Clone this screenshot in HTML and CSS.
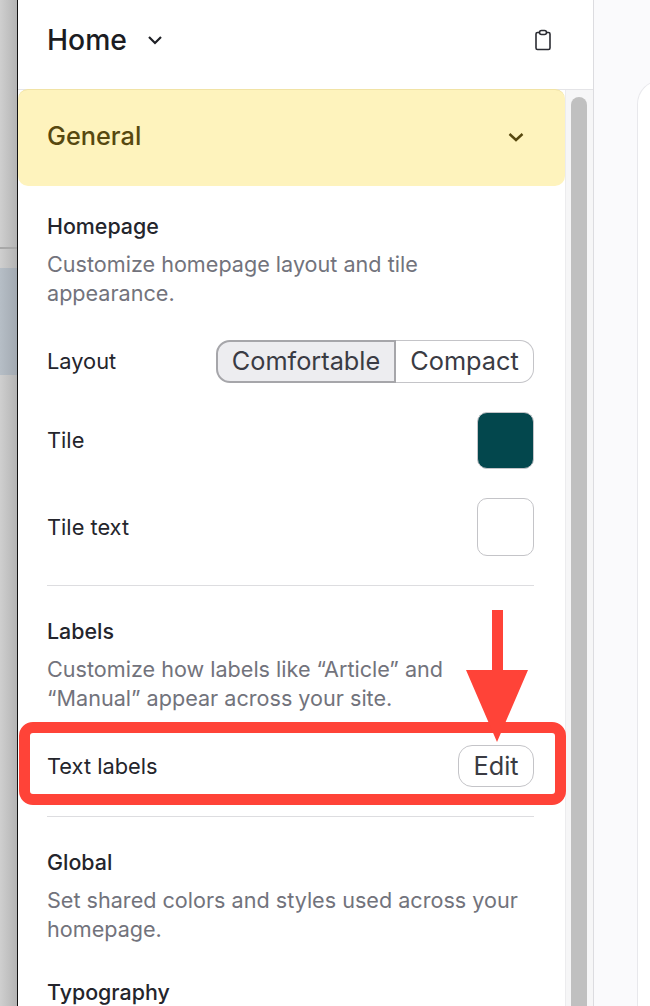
FILE: index.html
```html
<!DOCTYPE html>
<html lang="en">

<head>
  <meta charset="UTF-8">
  <title>Home settings</title>
  <link rel="stylesheet" href="styles.css">
</head>

<body>
  <div class="page">
    <div class="backdrop">
      <div class="backdrop-line"></div>
      <div class="backdrop-block"></div>
    </div>

    <div class="panel">
      <div class="panel-header">
        <div class="page-select">
          <span class="page-name">Home</span>
          <svg class="chevron" width="16" height="16" viewBox="0 0 16 16">
            <path d="M2 5l6 6 6-6" fill="none" stroke="#1f2026" stroke-width="2.2" />
          </svg>
        </div>
        <svg class="clipboard" width="18" height="22" viewBox="0 0 18 22">
          <path d="M5 3.5H3.5A1.5 1.5 0 0 0 2 5v14a1.5 1.5 0 0 0 1.5 1.5h11A1.5 1.5 0 0 0 16 19V5a1.5 1.5 0 0 0-1.500-1.500H13" fill="none" stroke="#2b2c33" stroke-width="1.600" />
          <rect x="5.500" y="1.500" width="7" height="4" rx="2" fill="none" stroke="#2b2c33" stroke-width="1.600" />
        </svg>
      </div>

      <div class="panel-body">
        <div class="scroll-area">
          <div class="accordion">
            <span>General</span>
            <svg width="16" height="16" viewBox="0 0 16 16">
              <path d="M1.500 5l6.500 6 6.500-6" fill="none" stroke="#57480f" stroke-width="2.400" />
            </svg>
          </div>

          <div class="content">
            <section class="group">
              <h3>Homepage</h3>
              <p>Customize homepage layout and tile appearance.</p>
              <div class="row row-layout">
                <span>Layout</span>
                <div class="segmented">
                  <button class="segment active">Comfortable</button>
                  <button class="segment">Compact</button>
                </div>
              </div>
              <div class="row row-tile">
                <span>Tile</span>
                <div class="swatch dark"></div>
              </div>
              <div class="row row-tile-text">
                <span>Tile text</span>
                <div class="swatch light"></div>
              </div>
            </section>

            <section class="group">
              <h3>Labels</h3>
              <p>Customize how labels like “Article” and “Manual” appear across your site.</p>
              <div class="row row-edit">
                <span>Text labels</span>
                <button class="edit-btn">Edit</button>
              </div>
            </section>

            <section class="group last">
              <h3>Global</h3>
              <p>Set shared colors and styles used across your homepage.</p>
              <h3 class="sub">Typography</h3>
            </section>
          </div>
        </div>

        <div class="scrollbar">
          <div class="thumb"></div>
        </div>
      </div>
    </div>

    <div class="preview">
      <div class="preview-card"></div>
    </div>

    <!-- annotation drawn on top of the screenshot -->
    <div class="callout"></div>
    <svg class="arrow" width="62" height="133" viewBox="0 0 62 133">
      <path d="M26 0h11v60h25L31 132 0 60h26z" fill="#ff4338" />
    </svg>
  </div>
</body>

</html>
```

FILE: styles.css
```css
* {
  box-sizing: border-box;
}

html,
body {
  margin: 0;
  height: 100%;
}

body {
  font-family: Inter, "Liberation Sans", sans-serif;
  color: #24252c;
  overflow: hidden;
}

.page {
  position: relative;
  display: flex;
  width: 650px;
  height: 1006px;
  overflow: hidden;
  background: #fafafc;
}

.backdrop {
  width: 18px;
  flex-shrink: 0;
  padding-top: 247px;
  background: linear-gradient(to right, #cfcfcf, #b4b4b4);
  border-right: 1px solid #111;
}

.backdrop-line {
  height: 2px;
  background: #a8a8a8;
}

.backdrop-block {
  height: 107px;
  margin-top: 19px;
  background: linear-gradient(to right, #b6bec6, #a2a9b1);
}

.panel {
  display: flex;
  flex-direction: column;
  width: 576px;
  flex-shrink: 0;
  background: #fff;
  border-right: 1px solid #dcdce0;
}

.panel-header {
  display: flex;
  justify-content: space-between;
  align-items: center;
  height: 90px;
  padding: 0 41px 10px 29px;
  border-bottom: 1px solid #e4e4e7;
  flex-shrink: 0;
}

.page-select {
  display: flex;
  align-items: center;
  gap: 20px;
}

.page-name {
  font-size: 28.3px;
  font-weight: 450;
  color: #1b1c22;
}

.panel-body {
  display: flex;
  flex: 1;
  min-height: 0;
}

.scroll-area {
  width: 547px;
  flex-shrink: 0;
}

.accordion {
  display: flex;
  justify-content: space-between;
  align-items: center;
  height: 97px;
  margin-top: -1px;
  padding: 0 41px 2px 29px;
  background: #fef3bd;
  border-top: 1px solid #f1e3a5;
  border-radius: 10px;
  font-size: 25.3px;
  font-weight: 450;
  color: #57480f;
  position: relative;
}

.accordion span {
  padding-bottom: 3px;
}

.content {
  padding: 28px 31px 0 29px;
}

.group {
  padding-bottom: 18px;
  border-bottom: 1px solid #dddde0;
  margin-bottom: 33px;
}

.group.last {
  border-bottom: none;
  margin-bottom: 0;
}

h3 {
  margin: 0 0 11px;
  font-size: 21.4px;
  line-height: 25px;
  font-weight: 450;
  color: #24252c;
}

h3.sub {
  margin-top: 36px;
}

p {
  margin: 0;
  font-size: 21.6px;
  line-height: 29px;
  color: #72737c;
}

.row {
  display: flex;
  justify-content: space-between;
  align-items: center;
  font-size: 21.8px;
}

.row-layout {
  margin-top: 32px;
}

.row-layout span,
.row-tile span {
  padding-bottom: 2px;
}

.row-tile {
  margin-top: 29px;
}

.row-tile-text {
  margin-top: 29px;
  margin-bottom: 11px;
}

.row-edit {
  margin-top: 32px;
  margin-bottom: 11px;
}

.segmented {
  display: flex;
  height: 43px;
}

.segment {
  padding: 0 0 2px;
  font-family: inherit;
  font-size: 25.3px;
  color: #3a3b43;
  background: #fff;
  border: 1px solid #c4c4c8;
}

.segment.active {
  width: 180px;
  background: #ededf0;
  border: 2px solid #a6a6aa;
  border-radius: 14px 0 0 14px;
}

.segment:last-child {
  width: 138px;
  border-left: none;
  border-radius: 0 14px 14px 0;
}

.swatch {
  width: 57px;
  height: 57px;
  border-radius: 10px;
}

.swatch.dark {
  background: #03474d;
  border: 1px solid #c4c4c8;
}

.swatch.light {
  height: 58px;
  background: #fff;
  border: 1px solid #c4c4c8;
}

.edit-btn {
  width: 76px;
  height: 42px;
  padding: 0 0 2px;
  font-family: inherit;
  font-size: 25.3px;
  color: #3a3b43;
  background: #fff;
  border: 1px solid #c4c4c8;
  border-radius: 14px;
}

.scrollbar {
  flex: 1;
  padding: 7px 6px 0 5px;
  background: #f6f6f7;
  border-left: 1px solid #ececee;
}

.thumb {
  height: 100%;
  background: #c0c0c0;
  border-radius: 8px 8px 0 0;
}

.preview {
  flex: 1;
  padding: 80px 0 0 43px;
}

.preview-card {
  height: 100%;
  width: 60px;
  background: #fff;
  border: 1px solid #e8e8ec;
  border-bottom: none;
  border-right: none;
  border-radius: 24px 0 0 0;
}

.callout {
  position: absolute;
  left: 19px;
  top: 722px;
  width: 547px;
  height: 83px;
  border: 11px solid #ff4338;
  border-radius: 14px;
}

.arrow {
  position: absolute;
  left: 466px;
  top: 610px;
}
```
